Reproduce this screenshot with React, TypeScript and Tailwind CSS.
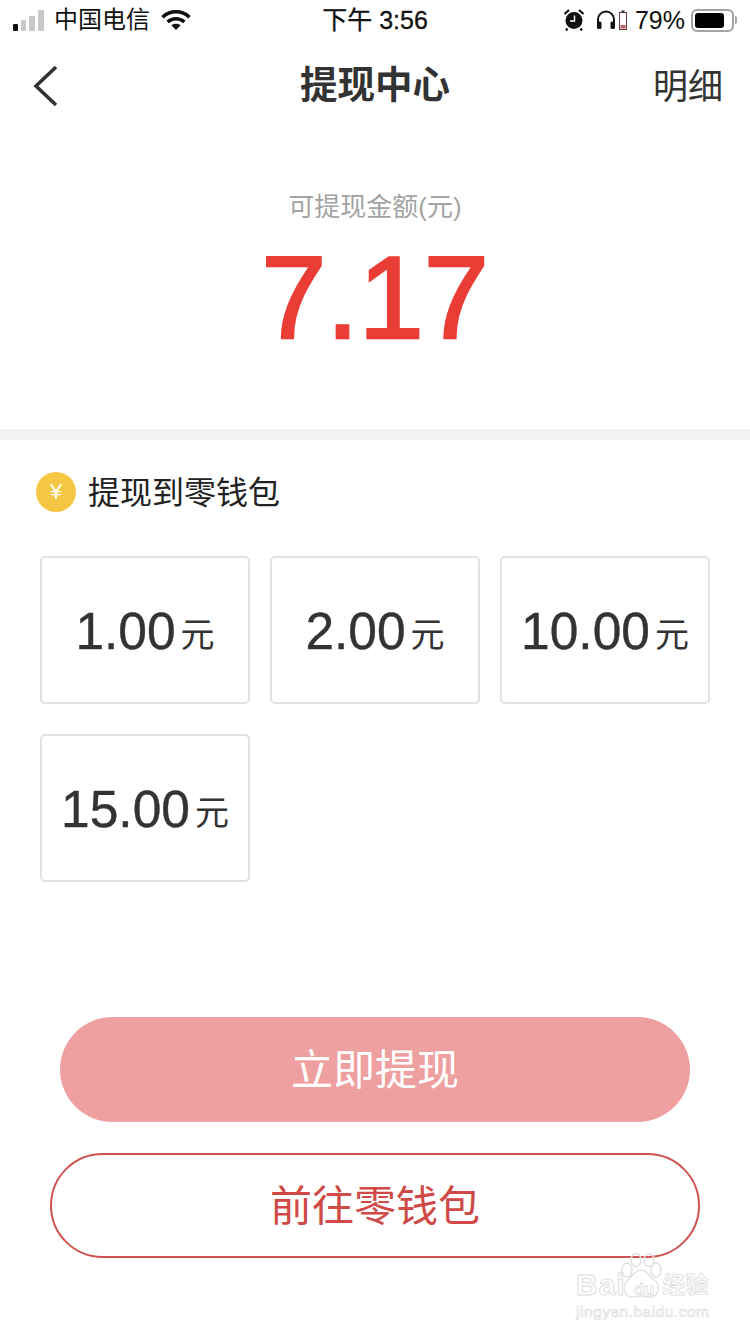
const sans = "font-['Liberation_Sans','Noto_Sans_CJK_SC',sans-serif]";

function Signal() {
  return (
    <div className="flex items-end gap-[3px]">
      <div className="h-[7px] w-[5px] rounded-[1px] bg-[#111]" />
      <div className="h-[11px] w-[5px] rounded-[1px] bg-[#c8c8c8]" />
      <div className="h-[15px] w-[6px] rounded-[1px] bg-[#c8c8c8]" />
      <div className="h-[21px] w-[6px] rounded-[1px] bg-[#c8c8c8]" />
    </div>
  );
}

function Wifi() {
  return (
    <svg width="30" height="22" viewBox="0 0 30 22" fill="none" stroke="#111" strokeWidth="3.6">
      <path d="M1.5 8.2C9 1 21 1 28.5 8.2" />
      <path d="M6.6 13C11.4 8.6 18.6 8.6 23.4 13" />
      <path d="M15 21l-4.6-4.8c2.6-2 6.6-2 9.2 0z" fill="#111" stroke="none" />
    </svg>
  );
}

function Alarm() {
  return (
    <svg width="20" height="22" viewBox="0 0 20 22">
      <circle cx="10" cy="11.5" r="8.5" fill="#111" />
      <path d="M0.5 5L5 1M19.5 5L15 1M3.5 19.5L2 21.5M16.5 19.5L18 21.5" stroke="#111" strokeWidth="2.2" />
      <path d="M10.5 6.5V12H6" stroke="#fff" strokeWidth="1.4" fill="none" />
    </svg>
  );
}

function Headphones() {
  return (
    <svg width="20" height="20" viewBox="0 0 20 20" fill="none">
      <path d="M2 14V9.5a8 8 0 0 1 16 0V14" stroke="#111" strokeWidth="2" />
      <rect x="1" y="11.5" width="4.5" height="7.5" rx="1.5" fill="#111" />
      <rect x="14.5" y="11.5" width="4.5" height="7.5" rx="1.5" fill="#111" />
    </svg>
  );
}

function SmallBattery() {
  return (
    <svg width="8" height="20" viewBox="0 0 8 20" fill="none">
      <rect x="0.5" y="2.5" width="7" height="17" stroke="#6b3a3a" strokeWidth="1" />
      <rect x="2.5" y="0.5" width="3" height="2" fill="#333" />
      <rect x="1.5" y="15" width="5" height="3.5" fill="#b5606b" />
    </svg>
  );
}

function Battery() {
  return (
    <div className="flex items-center gap-[1px]">
      <div className="flex h-[23px] w-[43px] items-center rounded-[6px] border-2 border-[#a3a3a3] p-[2px]">
        <div className="h-full w-[29px] rounded-[3px] bg-[#000]" />
      </div>
      <div className="h-[8px] w-[2px] rounded-r-sm bg-[#a3a3a3]" />
    </div>
  );
}

function AmountCard({ amount }: { amount: string }) {
  return (
    <div className="flex h-[148px] items-center justify-center rounded-[5px] border-2 border-[#e1e1e1] pt-[3px] text-[#333]">
      <span className="text-[51.5px] leading-none [-webkit-text-stroke:0.4px_#333]">{amount}</span>
      <span className="ml-[5px] mt-[6px] text-[34px] leading-none">元</span>
    </div>
  );
}

function Watermark() {
  return (
    <div className="pointer-events-none absolute left-[576px] top-[1253px] w-[140px] select-none">
      <svg className="absolute left-[43px] top-0" width="44" height="46" viewBox="0 0 44 46" fill="none" stroke="#e2e2e2" strokeWidth="1.5">
        <ellipse cx="8" cy="17" rx="5" ry="7" />
        <ellipse cx="17" cy="7" rx="5" ry="6.5" />
        <ellipse cx="30" cy="7" rx="5" ry="6.5" />
        <ellipse cx="37" cy="17" rx="5" ry="7" />
        <path d="M22 17c-6 0-8 6-13 10-6 5-5 17 4 17 4 0 6-1 9-1s5 1 9 1c9 0 11-12 4-17-5-4-7-10-13-10z" />
      </svg>
      <div className="mt-[19px] flex h-[26px] items-center">
        <span className={`${sans} text-[30px] font-bold leading-none tracking-[1px] text-transparent [-webkit-text-stroke:1px_#dedede]`}>Bai</span>
        <span className={`${sans} ml-[8px] mt-[8px] text-[17px] font-bold leading-none text-transparent [-webkit-text-stroke:0.8px_#dedede]`}>du</span>
        <span className={`${sans} ml-[8px] text-[23px] font-bold leading-none text-transparent [-webkit-text-stroke:0.8px_#dedede]`}>经验</span>
      </div>
      <div className={`${sans} mt-[6px] text-[15.5px] leading-none tracking-[0.5px] text-transparent [-webkit-text-stroke:0.7px_#dedede]`}>jingyan.baidu.com</div>
    </div>
  );
}

export default function App() {
  return (
    <div className={`${sans} relative h-[1334px] w-[750px] overflow-hidden bg-white`}>
      {/* status bar */}
      <div className="flex h-[40px] items-center justify-between pl-[13px] pr-[13px] text-[#111]">
        <div className="flex w-[240px] items-center">
          <Signal />
          <span className="ml-[10px] text-[24px] leading-none">中国电信</span>
          <div className="ml-[11px]"><Wifi /></div>
        </div>
        <span className="text-[25px] leading-none [-webkit-text-stroke:0.3px_#111]">下午 3:56</span>
        <div className="flex w-[240px] items-center justify-end">
          <Alarm />
          <div className="ml-[12px]"><Headphones /></div>
          <div className="ml-[3px]"><SmallBattery /></div>
          <span className="ml-[8px] text-[25px] leading-none">79%</span>
          <div className="ml-[6px]"><Battery /></div>
        </div>
      </div>

      {/* nav */}
      <div className="flex h-[92px] items-center justify-between pl-[33px] pr-[27px] text-[#333]">
        <div className="w-[94px]">
          <svg width="26" height="42" viewBox="0 0 26 42" fill="none" stroke="#333" strokeWidth="3.6">
            <path d="M23 2L3 21l20 19" />
          </svg>
        </div>
        <h1 className="text-[37.5px] font-bold leading-none">提现中心</h1>
        <div className="w-[100px] text-right text-[35px] leading-none">明细</div>
      </div>

      {/* balance */}
      <div className="flex h-[297px] flex-col items-center">
        <p className="mt-[62px] text-[26px] leading-none text-[#a3a3a3]">可提现金额(元)</p>
        <p className="mt-[19px] text-[117px] leading-[118px] text-[#e93d36] [-webkit-text-stroke:2.5px_#e93d36]">7.17</p>
      </div>

      <div className="h-[11px] bg-[#f3f3f3]" />

      {/* cards */}
      <div className="mt-[32px] flex items-center pl-[36px]">
        <div className="flex h-[40px] w-[40px] items-center justify-center rounded-full bg-[#f5c644] text-[22px] leading-none text-white">¥</div>
        <span className="ml-[12px] pt-[2px] text-[32px] leading-none text-[#222]">提现到零钱包</span>
      </div>
      <div className="mt-[44px] grid grid-cols-3 gap-x-[20px] gap-y-[30px] pl-[40px] pr-[40px]">
        <AmountCard amount="1.00" />
        <AmountCard amount="2.00" />
        <AmountCard amount="10.00" />
        <AmountCard amount="15.00" />
      </div>

      {/* buttons */}
      <div className="mt-[135px] flex flex-col items-center gap-[31px]">
        <button className="flex h-[105px] w-[630px] items-center justify-center rounded-full bg-[#ee9fa0] pt-[3px] text-[42px] leading-none text-white">立即提现</button>
        <button className="flex h-[105px] w-[650px] items-center justify-center rounded-full border-2 border-[#cf5450] bg-white pt-[3px] text-[42px] leading-none text-[#cf4a46]">前往零钱包</button>
      </div>

      <Watermark />
    </div>
  );
}
